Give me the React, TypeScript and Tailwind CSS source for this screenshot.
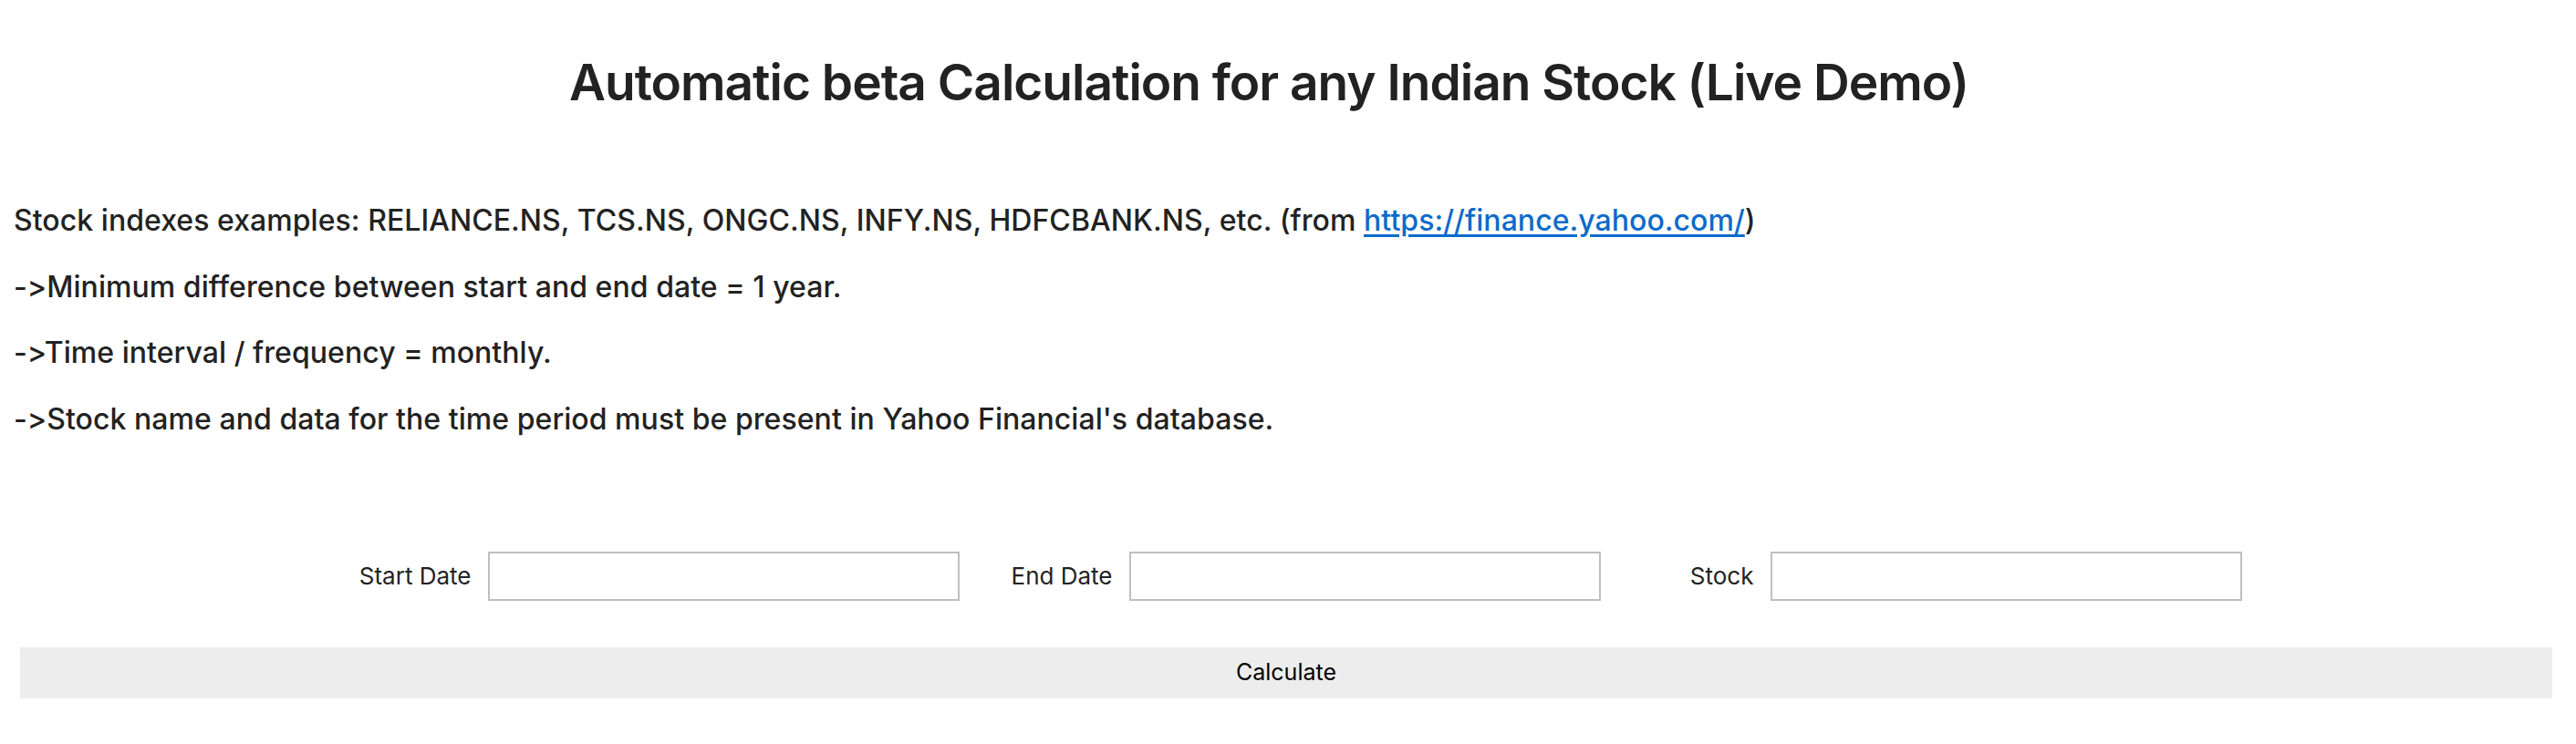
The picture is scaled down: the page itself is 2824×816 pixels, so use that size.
import React from 'react';

const notes = [
    '->Minimum difference between start and end date = 1 year.',
    '->Time interval / frequency = monthly.',
    "->Stock name and data for the time period must be present in Yahoo Financial's database.",
];

const Field = ({label}: {label: string}) => {
    return (
        <div className="flex items-center gap-[18px]">
            <label className="w-[150px] text-right text-[26px] text-[#222]">{label}</label>
            <input type="text" className="w-[517px] h-[54px] border-2 border-[#bfbfbf] bg-white outline-none"/>
        </div>
    );
};

const App = () => {
    return (
        <div className="w-[2824px] min-h-[816px] bg-white text-[#222] font-['Inter',sans-serif] [font-feature-settings:'calt'_0]">
            {/*title*/}
            <h1 className="pt-[54px] pr-[42px] text-center text-[55px] leading-[72px] font-semibold tracking-[-1px]">
                Automatic beta Calculation for any Indian Stock (Live Demo)
            </h1>

            {/*notes*/}
            <div className="mt-[96px] pl-[15px] flex flex-col gap-[32.6px] text-[32px] leading-[40px] font-medium tracking-[0.05px]">
                <p>
                    Stock indexes examples: RELIANCE.NS, TCS.NS, ONGC.NS, INFY.NS, HDFCBANK.NS, etc. (from{' '}
                    <a href="#" className="text-[#0b6bcb] underline underline-offset-[4px]">https://finance.yahoo.com/</a>)
                </p>
                {notes.map((n) => (
                    <p key={n}>{n}</p>
                ))}
            </div>

            {/*form*/}
            <div className="mt-[125px] flex justify-center gap-[18px]">
                <Field label="Start Date"/>
                <Field label="End Date"/>
                <Field label="Stock"/>
            </div>

            <div className="mt-[51px] pl-[22px] pr-[26px]">
                <button className="w-full h-[56px] bg-[#ededed] text-[25px] text-black">Calculate</button>
            </div>
        </div>
    );
};

export default App;
